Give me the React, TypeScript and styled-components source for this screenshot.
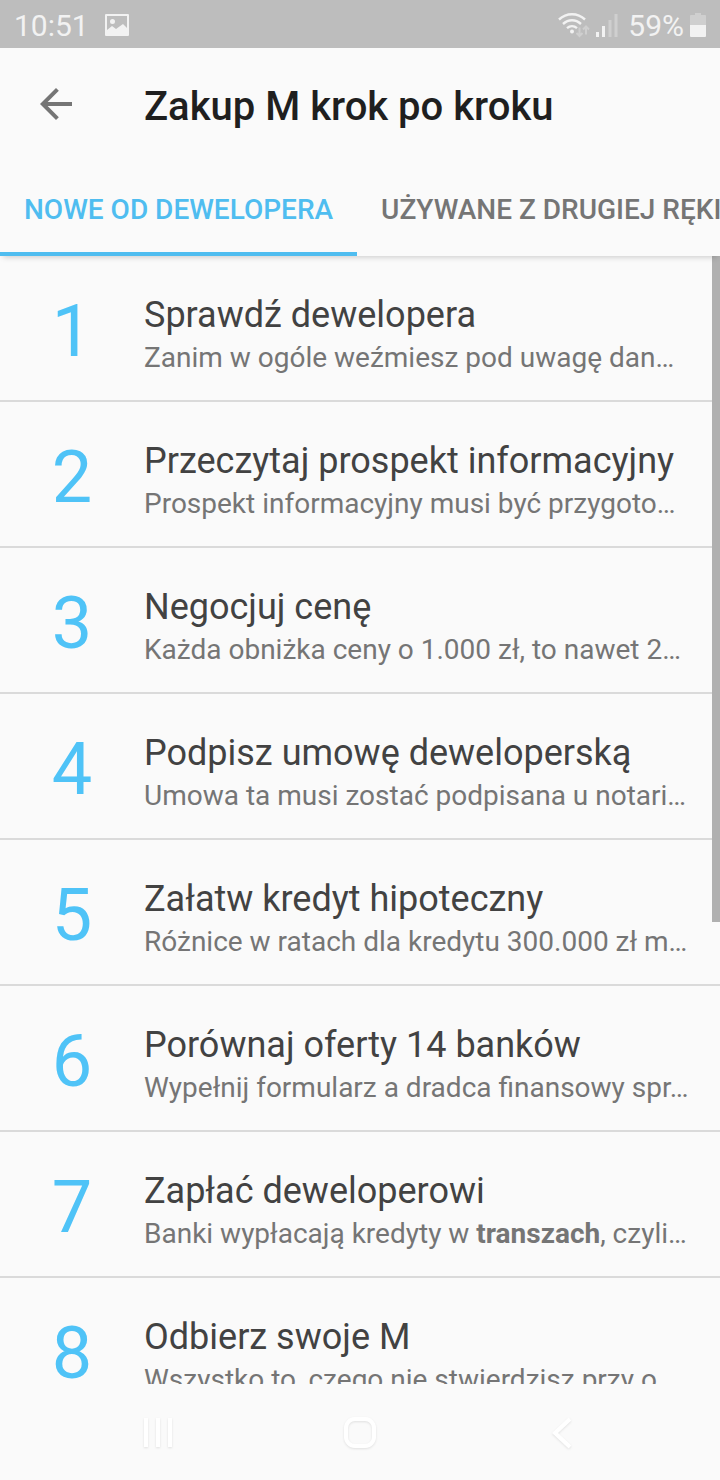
import React, { useState } from "react";
import styled, { createGlobalStyle } from "styled-components";

const GlobalStyle = createGlobalStyle`
  *, *::before, *::after { box-sizing: border-box; }
  html, body { margin: 0; padding: 0; overflow: hidden; }
  body { background: #fafafa; font-family: Roboto, "Noto Sans", sans-serif; }
  button { border: 0; padding: 0; margin: 0; background: none; font: inherit; color: inherit; cursor: pointer; }
  h1, h2, p, ol { margin: 0; padding: 0; }
  svg { display: block; }
`;

const Screen = styled.div`
  display: flex;
  flex-direction: column;
  height: 100vh;
  overflow: hidden;
  background: #fafafa;
`;

const StatusBar = styled.div`
  flex: none;
  display: flex;
  align-items: center;
  justify-content: space-between;
  height: 48px;
  padding: 4px 14px 0;
  background: #bdbdbd;
  color: #f2f2f2;
  font-size: 30px;
  line-height: 36px;
`;

const StatusGroup = styled.div<{ $gap: number }>`
  display: flex;
  align-items: center;
  gap: ${(p) => p.$gap}px;

  svg { margin-bottom: 2px; }
`;

const AppBar = styled.header`
  flex: none;
  display: grid;
  grid-template-columns: 144px 1fr;
  align-items: center;
  height: 112px;
`;

const BackButton = styled.button`
  justify-self: start;
  margin-left: 32px;
  width: 48px;
  height: 48px;
  color: #757575;
`;

const PageTitle = styled.h1`
  padding-top: 6px;
  color: #1f1f1f;
  font-size: 40px;
  font-weight: 500;
  line-height: 48px;
  white-space: nowrap;
`;

const Tabs = styled.div`
  flex: none;
  position: relative;
  z-index: 1;
  display: flex;
  height: 96px;
  background: #fafafa;
  box-shadow: 0 4px 6px -3px rgba(0, 0, 0, 0.2);
`;

const Tab = styled.button<{ $active: boolean }>`
  flex: none;
  padding: 8px 24px 0;
  border-bottom: 4px solid ${(p) => (p.$active ? "#4fbdf0" : "transparent")};
  color: ${(p) => (p.$active ? "#4fbdf0" : "#757575")};
  font-size: 28px;
  font-weight: 500;
  line-height: 34px;
  text-transform: uppercase;
  white-space: nowrap;
`;

const ListArea = styled.main`
  position: relative;
  flex: 1;
  min-height: 0;
  overflow: hidden;
`;

const StepList = styled.ol`
  list-style: none;
`;

const StepRow = styled.li`
  display: grid;
  grid-template-columns: 144px 1fr;
  height: 146px;
  padding: 34px 32px 0 0;
  border-bottom: 2px solid #dadada;
`;

const StepNumber = styled.span`
  color: #4fc3f7;
  font-size: 72px;
  line-height: 84px;
  text-align: center;
`;

const StepText = styled.div`
  min-width: 0;
  padding-top: 4px;
  white-space: nowrap;
`;

const StepTitle = styled.h2`
  color: #424242;
  font-size: 36px;
  font-weight: 400;
  line-height: 42px;
`;

const StepSummary = styled.p`
  padding-top: 5px;
  color: #757575;
  font-size: 28px;
  line-height: 34px;
`;

const ScrollThumb = styled.div`
  position: absolute;
  top: 0;
  right: 0;
  width: 8px;
  height: 59%;
  background: #b0b0b0;
`;

const NavBar = styled.nav`
  flex: none;
  display: flex;
  justify-content: center;
  height: 96px;
  padding-top: 2px;
`;

const NavButton = styled.button`
  display: flex;
  align-items: center;
  justify-content: center;
  width: 28%;
`;

const NavIcon = styled.svg`
  fill: none;
  stroke: #ffffff;
  stroke-width: 4;
  filter: drop-shadow(0 1px 1px rgba(0, 0, 0, 0.1));
`;

const tabs = ["Nowe od dewelopera", "Używane z drugiej ręki"];

const steps: { title: string; summary: React.ReactNode }[] = [
  { title: "Sprawdź dewelopera", summary: "Zanim w ogóle weźmiesz pod uwagę dan…" },
  { title: "Przeczytaj prospekt informacyjny", summary: "Prospekt informacyjny musi być przygoto…" },
  { title: "Negocjuj cenę", summary: "Każda obniżka ceny o 1.000 zł, to nawet 2…" },
  { title: "Podpisz umowę deweloperską", summary: "Umowa ta musi zostać podpisana u notari…" },
  { title: "Załatw kredyt hipoteczny", summary: "Różnice w ratach dla kredytu 300.000 zł m…" },
  { title: "Porównaj oferty 14 banków", summary: "Wypełnij formularz a dradca finansowy spr…" },
  { title: "Zapłać deweloperowi", summary: <>Banki wypłacają kredyty w <b>transzach</b>, czyli…</> },
  { title: "Odbierz swoje M", summary: "Wszystko to, czego nie stwierdzisz przy o…" },
];

const PictureIcon = () => (
  <svg width="24" height="22" viewBox="0 0 24 22" aria-hidden="true">
    <path
      fill="currentColor"
      fillRule="evenodd"
      d="M1 0h22a1 1 0 0 1 1 1v20a1 1 0 0 1-1 1H1a1 1 0 0 1-1-1V1a1 1 0 0 1 1-1zM2 2v14l5-4 4 3 7-5 4 4V2zM7.500 5a2.500 2.500 0 1 1 0 5a2.500 2.500 0 0 1 0-5z"
    />
  </svg>
);

const WifiIcon = () => (
  <svg width="32" height="26" viewBox="0 0 32 26" fill="none" stroke="currentColor" strokeWidth="2.400" aria-hidden="true">
    <path d="M1 7.500C8.500 .5 19.500 .5 27 7.500M5 12C10.500 7 17.500 7 23 12M9 16.200c3-2.600 7-2.600 10 0" />
    <circle cx="14" cy="19.500" r="2" fill="currentColor" stroke="none" />
    <g opacity="0.35" strokeWidth="2">
      <path d="M21.500 15.500v8M18.500 21l3 3 3-3M28 22.500v-8M25 17.500l3-3 3 3" />
    </g>
  </svg>
);

const SignalIcon = () => (
  <svg width="22" height="24" viewBox="0 0 22 24" fill="currentColor" aria-hidden="true">
    <path d="M0 19h3v5H0zM6 13h3v11H6z" />
    <path opacity="0.35" d="M12.500 7h3v17h-3zM18.500 1h3v23h-3z" />
  </svg>
);

const BatteryIcon = () => (
  <svg width="16" height="24" viewBox="0 0 16 24" fill="currentColor" aria-hidden="true">
    <path opacity="0.35" d="M5 0h6v2h4a1 1 0 0 1 1 1v9H0V3a1 1 0 0 1 1-1h4z" />
    <path d="M0 12h16v11a1 1 0 0 1-1 1H1a1 1 0 0 1-1-1z" />
  </svg>
);

export default function App() {
  const [active, setActive] = useState(0);

  return (
    <Screen>
      <GlobalStyle />
      <StatusBar>
        <StatusGroup $gap={16}>
          <span>10:51</span>
          <PictureIcon />
        </StatusGroup>
        <StatusGroup $gap={10}>
          <StatusGroup $gap={6}>
            <WifiIcon />
            <SignalIcon />
          </StatusGroup>
          <StatusGroup $gap={6}>
            <span>59%</span>
            <BatteryIcon />
          </StatusGroup>
        </StatusGroup>
      </StatusBar>

      <AppBar>
        <BackButton type="button" aria-label="Wstecz">
          <svg width="48" height="48" viewBox="0 0 24 24" fill="currentColor" aria-hidden="true">
            <path d="M20 11H7.830l5.590-5.590L12 4l-8 8 8 8 1.410-1.410L7.830 13H20v-2z" />
          </svg>
        </BackButton>
        <PageTitle>Zakup M krok po kroku</PageTitle>
      </AppBar>

      <Tabs role="tablist">
        {tabs.map((label, i) => (
          <Tab key={label} type="button" role="tab" aria-selected={active === i} $active={active === i} onClick={() => setActive(i)}>
            {label}
          </Tab>
        ))}
      </Tabs>

      <ListArea>
        <StepList>
          {steps.map((step, i) => (
            <StepRow key={step.title}>
              <StepNumber>{i + 1}</StepNumber>
              <StepText>
                <StepTitle>{step.title}</StepTitle>
                <StepSummary>{step.summary}</StepSummary>
              </StepText>
            </StepRow>
          ))}
        </StepList>
        <ScrollThumb />
      </ListArea>

      <NavBar>
        <NavButton type="button" aria-label="Ostatnie aplikacje">
          <NavIcon width="32" height="32" viewBox="0 0 32 32" aria-hidden="true">
            <path d="M4 1v29M16 1v29M28 1v29" />
          </NavIcon>
        </NavButton>
        <NavButton type="button" aria-label="Ekran główny">
          <NavIcon width="34" height="32" viewBox="0 0 34 32" aria-hidden="true">
            <rect x="3" y="2" width="28" height="27" rx="9" />
          </NavIcon>
        </NavButton>
        <NavButton type="button" aria-label="Cofnij">
          <NavIcon width="24" height="32" viewBox="0 0 24 32" aria-hidden="true">
            <path d="M20 2L5 16l15 14" />
          </NavIcon>
        </NavButton>
      </NavBar>
    </Screen>
  );
}
